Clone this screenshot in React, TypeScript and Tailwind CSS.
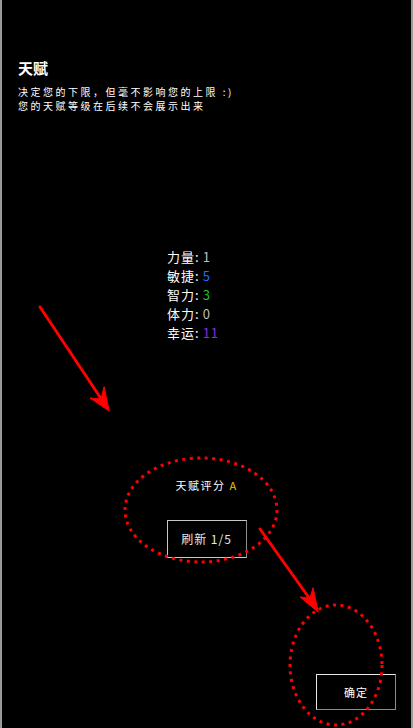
import React from "react"

const stats = [
  { label: "力量", value: "1", color: "text-[#bdbdbd]" },
  { label: "敏捷", value: "5", color: "text-[#1f6fff]" },
  { label: "智力", value: "3", color: "text-[#22c322]" },
  { label: "体力", value: "0", color: "text-[#bdbdbd]" },
  { label: "幸运", value: "11", color: "text-[#8a2be2]" },
]

function Annotations() {
  return (
    <svg
      className="absolute inset-0 pointer-events-none"
      width="413"
      height="728"
      viewBox="0 0 413 728"
    >
      <g fill="none" stroke="#ff0000" strokeWidth="3" strokeDasharray="3 4.5">
        <ellipse cx="199" cy="510" rx="76" ry="52" />
        <ellipse cx="334" cy="665" rx="46" ry="60" />
      </g>
      <g stroke="#ff0000" strokeWidth="3" strokeLinecap="round" fill="#ff0000">
        <line x1="38" y1="307" x2="100" y2="400" />
        <polygon points="107,411 88,398 99,399 102,387" strokeWidth="1" strokeLinejoin="round" />
        <line x1="258" y1="529" x2="310" y2="602" />
        <polygon points="316,612 298,597 308,598 311,588" strokeWidth="1" strokeLinejoin="round" />
      </g>
    </svg>
  )
}

export default function App() {
  return (
    <div
      className="relative h-[728px] w-[413px] overflow-hidden bg-black border-l-2 border-r-2 border-[#9a9a9a] text-white"
      style={{ fontFamily: '"Noto Sans CJK SC", "Noto Sans", sans-serif' }}
    >
      <div className="flex h-full flex-col">
        <h1 className="pl-[16px] pt-[58px] text-[15px] font-bold leading-[20px]">天赋</h1>
        <div className="mt-[7px] flex flex-col pl-[16px] text-[10px] leading-[14px] tracking-[2.5px]">
          <p>决定您的下限，但毫不影响您的上限 :)</p>
          <p>您的天赋等级在后续不会展示出来</p>
        </div>

        <div className="mt-[134px] pl-[165px] text-[13px] leading-[19px] tracking-[1px]">
          {stats.map((s) => (
            <div key={s.label} className="flex">
              <span>{s.label}:</span>
              <span className={`ml-[3px] ${s.color}`}>{s.value}</span>
            </div>
          ))}
        </div>

        <p className="mt-[135px] text-center text-[11px] leading-[16px] tracking-[1.5px]">
          天赋评分 <span className="text-[#f0c400]">A</span>
        </p>

        <button className="mx-auto mt-[27px] flex h-[38px] w-[80px] items-center justify-center border border-[#c8c8c8] border-r-[#8c8c8c] text-[12px] tracking-[1px] text-[#e6e6e6]">
          刷新 1/5
        </button>

        <button className="mr-[15px] mt-[116px] flex h-[36px] w-[80px] items-center justify-center self-end border border-[#e6e6e6] border-r-[#8c8c8c] border-b-[#8c8c8c] text-[11px] tracking-[1px]">
          确定
        </button>
      </div>
      <Annotations />
    </div>
  )
}
